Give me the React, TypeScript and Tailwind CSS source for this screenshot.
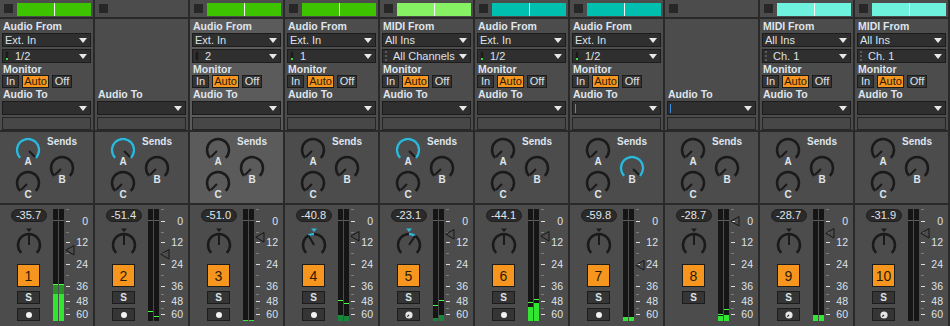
import React from 'react'

type Meter = { fill?: number; dim?: number; peak?: number; dark?: boolean }
type Track = {
  n: number
  bar?: string
  kind: 'audio' | 'midi' | 'none'
  from?: string
  ch?: string
  chLevel?: number
  vol: string
  volY: number
  sends: [number, number, number]
  pan: number
  meters: [Meter, Meter]
  arm: 'dot' | 'midi' | 'none'
  cursor?: boolean
  selected?: boolean
}

const tracks: Track[] = [
  { n: 1, bar: 'bg-[#3ec300]', kind: 'audio', from: 'Ext. In', ch: '1/2', chLevel: 2, vol: '-35.7', volY: 250, sends: [1, 0, 0], pan: 0, meters: [{ fill: 27, dim: 9, peak: 36 }, { fill: 27, dim: 9, peak: 36 }], arm: 'dot' },
  { n: 2, kind: 'none', vol: '-51.4', volY: 254, sends: [1, 0, 0], pan: 0, meters: [{ peak: 9 }, { peak: 4 }], arm: 'dot' },
  { n: 3, bar: 'bg-[#3ec300]', kind: 'audio', from: 'Ext. In', ch: '2', chLevel: 0, vol: '-51.0', volY: 237, sends: [0, 0, 0], pan: 0, meters: [{ fill: 1 }, { fill: 1 }], arm: 'dot', selected: true },
  { n: 4, bar: 'bg-[#3ec300]', kind: 'audio', from: 'Ext. In', ch: '1', chLevel: 2, vol: '-40.8', volY: 236, sends: [0, 0, 0], pan: -0.22, meters: [{ fill: 6, peak: 20, dark: true }, { fill: 5, peak: 17, dark: true }], arm: 'dot' },
  { n: 5, bar: 'bg-[#86f163]', kind: 'midi', from: 'All Ins', ch: 'All Channels', vol: '-23.1', volY: 234, sends: [1, 0, 0], pan: 0.25, meters: [{ fill: 3, peak: 15, dark: true }, { fill: 6, peak: 20, dark: true }], arm: 'midi' },
  { n: 6, bar: 'bg-[#00bfae]', kind: 'audio', from: 'Ext. In', ch: '1/2', chLevel: 2, vol: '-44.1', volY: 236, sends: [0, 0, 0], pan: 0, meters: [{ fill: 14, peak: 18 }, { fill: 18, peak: 21 }], arm: 'dot' },
  { n: 7, bar: 'bg-[#00bfae]', kind: 'audio', from: 'Ext. In', ch: '1/2', chLevel: 2, vol: '-59.8', volY: 265, sends: [0, 1, 0], pan: 0, meters: [{ fill: 4 }, { fill: 4 }], arm: 'dot', cursor: true },
  { n: 8, kind: 'none', vol: '-28.7', volY: 221, sends: [0, 0, 0], pan: 0, meters: [{ fill: 5, peak: 6 }, { fill: 6, peak: 11 }], arm: 'none', cursor: true },
  { n: 9, bar: 'bg-[#6ef2dd]', kind: 'midi', from: 'All Ins', ch: 'Ch. 1', vol: '-28.7', volY: 233, sends: [0, 0, 0], pan: 0, meters: [{ fill: 6 }, { fill: 6 }], arm: 'midi' },
  { n: 10, bar: 'bg-[#6ef2dd]', kind: 'midi', from: 'All Ins', ch: 'Ch. 1', vol: '-31.9', volY: 233, sends: [0, 0, 0], pan: 0, meters: [{}, {}], arm: 'midi' },
]

const BLUE = '#30b6d9'
const INK = '#1a1a1a'

function arc(cx: number, cy: number, r: number, a1: number, a2: number) {
  const pt = (a: number) => [cx + r * Math.sin((a * Math.PI) / 180), cy - r * Math.cos((a * Math.PI) / 180)]
  const [x1, y1] = pt(Math.min(a1, a2))
  const [x2, y2] = pt(Math.max(a1, a2))
  const large = Math.abs(a2 - a1) > 180 ? 1 : 0
  return `M${x1} ${y1} A${r} ${r} 0 ${large} 1 ${x2} ${y2}`
}

function SendKnob({ value, label }: { value: number; label: string }) {
  const a = -135 + 270 * value
  const rad = (a * Math.PI) / 180
  return (
    <div className="relative w-[26px] h-[26px]">
      <svg width="26" height="26">
        <path d={arc(13, 13, 11, -135, 135)} stroke={INK} strokeWidth="2.5" fill="none" />
        {value > 0 && <path d={arc(13, 13, 11, -135, a)} stroke={BLUE} strokeWidth="2.5" fill="none" />}
        <line x1={13 + 1.5 * Math.sin(rad)} y1={13 - 1.5 * Math.cos(rad)} x2={13 + 10 * Math.sin(rad)} y2={13 - 10 * Math.cos(rad)} stroke={INK} strokeWidth="2" />
      </svg>
      <span className="absolute left-0 right-0 top-[19px] text-center text-[10px] font-bold leading-[12px] text-[#dfe5ec]">{label}</span>
    </div>
  )
}

function PanKnob({ pan }: { pan: number }) {
  const a = pan * 135
  const rad = (a * Math.PI) / 180
  const on = pan !== 0
  return (
    <svg width="26" height="28" className="mt-[5px]">
      <path d={arc(13, 18, 11, -135, 135)} stroke={INK} strokeWidth="2.5" fill="none" />
      {on && <path d={arc(13, 18, 11, 0, a)} stroke={BLUE} strokeWidth="2.5" fill="none" />}
      <polygon points="10,1.5 16,1.5 13,5" fill={on ? BLUE : INK} />
      <line x1="13" y1="18" x2={13 + 11 * Math.sin(rad)} y2={18 - 11 * Math.cos(rad)} stroke={INK} strokeWidth="2" />
    </svg>
  )
}

function Arrow() {
  return (
    <svg width="8" height="5" className="shrink-0">
      <path d="M0 0H8L4 5Z" fill="#e8e8e8" />
    </svg>
  )
}

function Dropdown({ children, cursor }: { children?: React.ReactNode; cursor?: boolean }) {
  return (
    <div className="h-[14px] flex items-center gap-[2px] bg-[#2f2f2f] border border-[#1c1c1c] pl-[2px] pr-[3px] text-[11px] leading-[12px] text-[#dde2e8]">
      {cursor && <span className="w-[1px] h-[9px] bg-[#3d8be0]" />}
      <span className="flex-1 flex items-center gap-[6px] truncate">{children}</span>
      <Arrow />
    </div>
  )
}

function Label({ children }: { children: React.ReactNode }) {
  return <div className="h-[13px] leading-[13px] text-[10.5px] font-bold text-[#dfe5ec] pl-[1px]">{children}</div>
}

function MonBtn({ children, w, on }: { children: React.ReactNode; w: string; on?: boolean }) {
  return (
    <div className={`${w} h-[13px] flex items-center justify-center border border-[#1c1c1c] text-[11px] leading-[11px] ${on ? 'bg-[#f7961e] text-[#2a1a05]' : 'bg-[#343434] text-[#dde2e8]'}`}>
      {children}
    </div>
  )
}

function IOSection({ t }: { t: Track }) {
  const inputIcon =
    t.kind === 'audio' ? (
      <span className="relative w-[4px] h-[10px] bg-[#1a1a1a] border border-[#2a2a2a]">
        {t.chLevel ? <span className="absolute left-0 right-0 bottom-0 h-[2px] bg-[#33e03a]" /> : null}
      </span>
    ) : (
      <span className="w-[2px] h-[10px] border-l-2 border-dotted border-[#5a5a5a]" />
    )
  return (
    <div className={`h-[111px] flex flex-col px-[2px] pt-[1px] ${t.selected ? 'bg-[#5b5b5b]' : 'bg-[#4c4c4c]'} ${t.kind === 'none' ? 'justify-end pb-0' : ''}`}>
      {t.kind !== 'none' && (
        <>
          <Label>{t.kind === 'midi' ? 'MIDI From' : 'Audio From'}</Label>
          <Dropdown>{t.from}</Dropdown>
          <div className="h-[2px]" />
          <Dropdown>
            {inputIcon}
            <span>{t.ch}</span>
          </Dropdown>
          <div className="h-[12px] leading-[12px] text-[10.5px] font-bold text-[#dfe5ec] pl-[1px]">Monitor</div>
          <div className="flex gap-[3px]">
            <MonBtn w="w-[17px]">In</MonBtn>
            <MonBtn w="w-[27px]" on>
              Auto
            </MonBtn>
            <MonBtn w="w-[20px]">Off</MonBtn>
          </div>
        </>
      )}
      <Label>Audio To</Label>
      <Dropdown cursor={t.cursor} />
      <div className="h-[2px]" />
      <div className="h-[13px] bg-[#474747] border border-[#262626]" />
    </div>
  )
}

function Sends({ t }: { t: Track }) {
  return (
    <div className={`h-[71px] flex pl-[15px] gap-[6px] ${t.selected ? 'bg-[#5b5b5b]' : 'bg-[#4c4c4c]'}`}>
      <div className="flex flex-col pt-[5px] gap-[7px]">
        <SendKnob value={t.sends[0]} label="A" />
        <SendKnob value={t.sends[2]} label="C" />
      </div>
      <div className="flex flex-col pt-[4px]">
        <div className="h-[12px] leading-[12px] text-[10px] font-bold text-[#dfe5ec]">Sends</div>
        <div className="ml-[2px] mt-[7px]">
          <SendKnob value={t.sends[1]} label="B" />
        </div>
      </div>
    </div>
  )
}

function MeterBar({ m }: { m: Meter }) {
  const fillColor = m.dark ? 'bg-[#16873a]' : 'bg-[#33e533]'
  return (
    <div className="relative w-[5px] h-full bg-[#151515]">
      <div className="absolute left-0 right-0 top-[11px] h-[1px] bg-[#5e5e5e]" />
      {m.dim ? <div className="absolute left-0 right-0 bg-[#2b8f2b]" style={{ bottom: m.fill ?? 0, height: m.dim }} /> : null}
      {m.fill ? <div className={`absolute left-0 right-0 bottom-0 ${fillColor}`} style={{ height: m.fill }} /> : null}
      {m.peak ? <div className="absolute left-0 right-0 h-[1px] bg-[#45ff45]" style={{ bottom: m.peak }} /> : null}
    </div>
  )
}

const smallTicks = [4, 27, 48, 70, 89, 103]
const bigTicks: [number, string][] = [
  [16, '0'],
  [37, '12'],
  [59, '24'],
  [81, '36'],
  [96, '48'],
  [109, '60'],
]

function Mixer({ t }: { t: Track }) {
  return (
    <div className="h-[121px] bg-[#4c4c4c] flex">
      <div className="ml-[4px] w-[49px] flex flex-col items-center pt-[4px]">
        <div className="w-[36px] h-[13px] rounded-full bg-[#2b2b2b] border border-[#1f1f1f] flex items-center justify-center text-[11px] leading-[11px] text-[#e2e6ea]">
          {t.vol}
        </div>
        <PanKnob pan={t.pan} />
        <div className="mt-[9px] w-[23px] h-[23px] bg-[#f7961e] border border-[#1c1c1c] flex items-center justify-center text-[14px] leading-[14px] text-[#2a1a05]">
          {t.n}
        </div>
        <div className="mt-[4px] w-[23px] h-[13px] bg-[#353535] border border-[#1c1c1c] flex items-center justify-center text-[10px] font-bold leading-[10px] text-[#dde2e8]">
          S
        </div>
        {t.arm !== 'none' && (
          <div className="mt-[4px] w-[23px] h-[13px] bg-[#353535] border border-[#1c1c1c] flex items-center justify-center">
            {t.arm === 'dot' ? (
              <span className="w-[6px] h-[6px] rounded-full bg-[#f2f2f2]" />
            ) : (
              <svg width="8" height="8">
                <circle cx="4" cy="4" r="3.6" fill="#e6e6e6" />
                <path d="M4 4L2.2 5.6" stroke="#2a2a2a" strokeWidth="1.2" />
              </svg>
            )}
          </div>
        )}
      </div>
      <div className="mt-[4px] h-[112px] w-[11px] flex gap-[1px]">
        <MeterBar m={t.meters[0]} />
        <MeterBar m={t.meters[1]} />
      </div>
      <div className="relative flex-1 h-full">
        {smallTicks.map((y) => (
          <div key={y} className="absolute left-[2px] w-[3px] h-[1px] bg-[#7c7c7c]" style={{ top: y }} />
        ))}
        {bigTicks.map(([y, l]) => (
          <React.Fragment key={l}>
            <div className="absolute left-[2px] w-[4px] h-[1px] bg-[#dcdcdc]" style={{ top: y }} />
            <div className="absolute right-[5px] h-[12px] leading-[12px] text-[10.5px] text-[#dde3ea]" style={{ top: y - 6 }}>
              {l}
            </div>
          </React.Fragment>
        ))}
        <svg width="10" height="11" className="absolute left-[1px]" style={{ top: t.volY - 205 - 5 }}>
          <path d="M9 0.5V10L0.8 5.25Z" fill="none" stroke="#161616" strokeWidth="1" />
        </svg>
      </div>
    </div>
  )
}

function Header({ t }: { t: Track }) {
  return (
    <div className="h-[17px] bg-[#4c4c4c] flex items-start pl-[4px] pt-[3px]">
      <div className="mt-[1px] w-[9px] h-[9px] bg-[#272727]" />
      {t.bar && (
        <div className={`ml-[4px] w-[74px] h-[13px] relative ${t.bar}`}>
          <div className="absolute left-[37px] top-0 bottom-0 w-[1px] bg-[#f4f4f4]" />
        </div>
      )}
    </div>
  )
}

export default function App() {
  return (
    <div className="w-[950px] h-[326px] bg-[#292929] flex gap-[2px] overflow-hidden font-['Liberation_Sans',Arial,sans-serif]">
      {tracks.map((t) => (
        <div key={t.n} className="w-[93px] shrink-0 flex flex-col gap-[2px]">
          <Header t={t} />
          <IOSection t={t} />
          <Sends t={t} />
          <Mixer t={t} />
        </div>
      ))}
    </div>
  )
}
